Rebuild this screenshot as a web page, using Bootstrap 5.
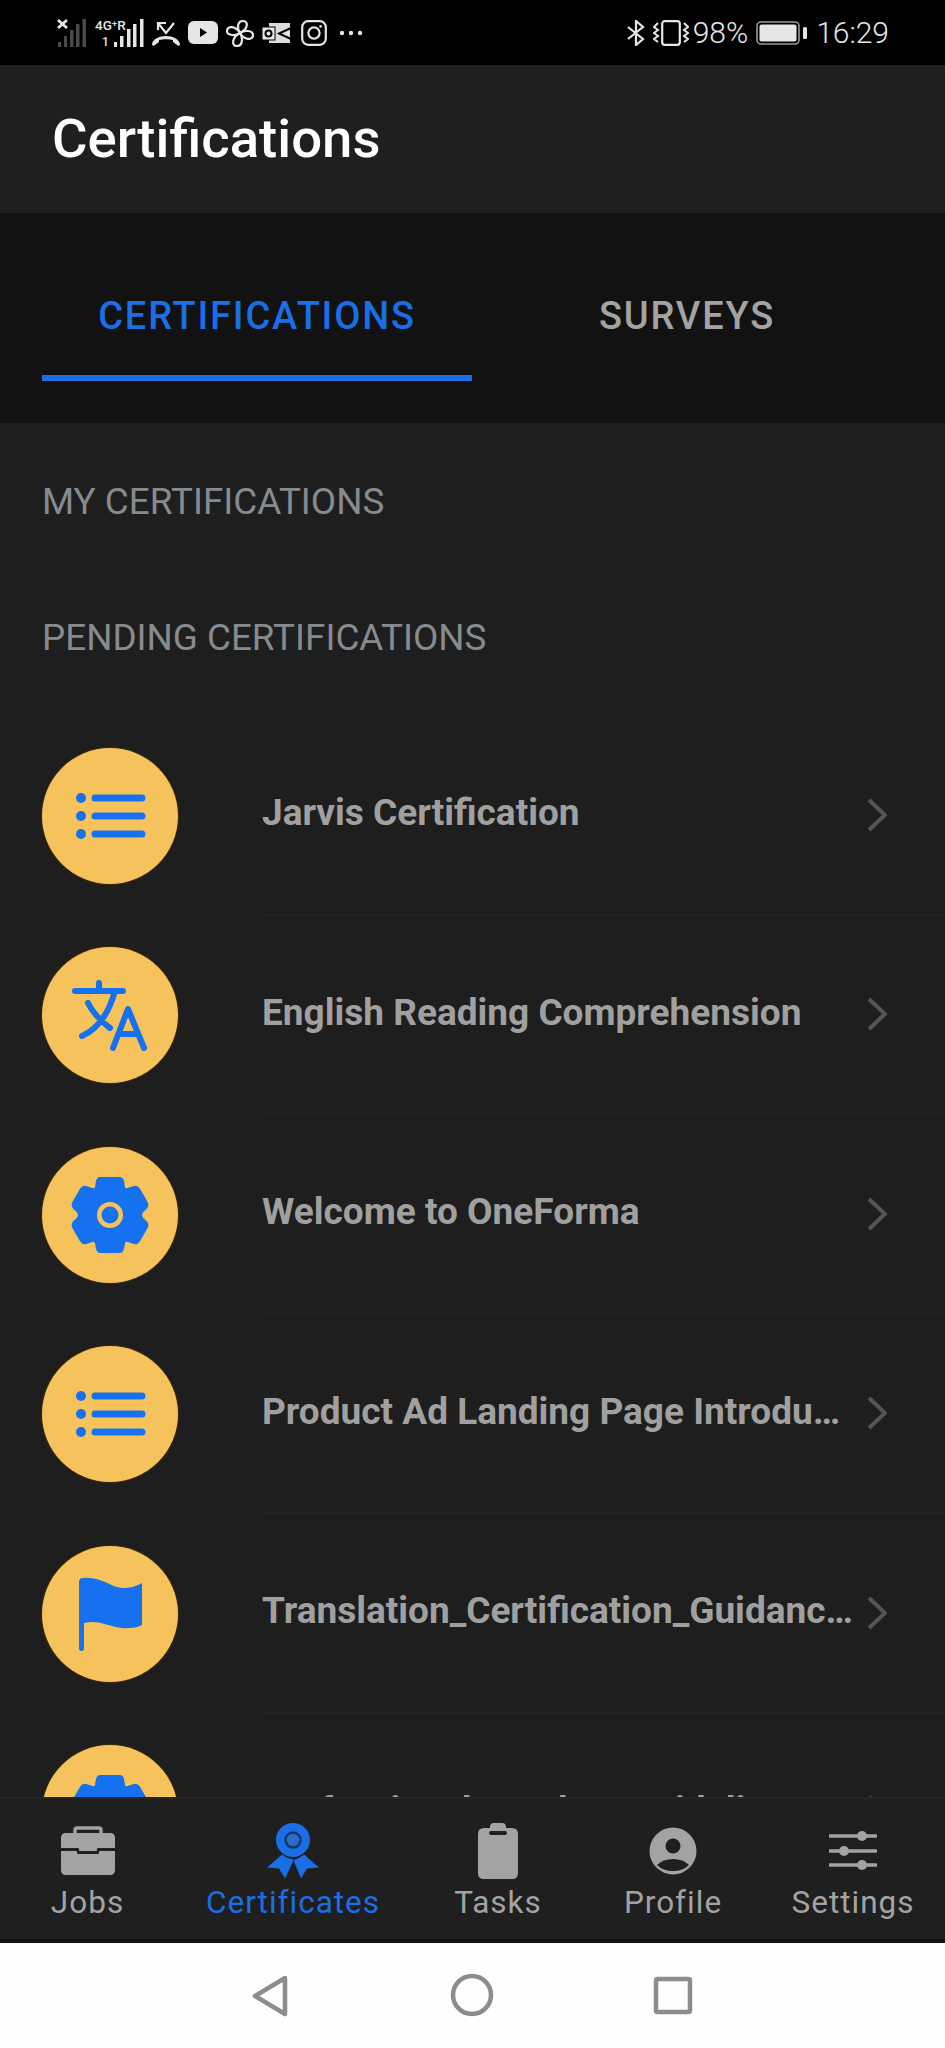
<!DOCTYPE html>
<html lang="en">
<head>
  <meta charset="UTF-8">
  <title>Certifications</title>
  <meta name="viewport" content="width=device-width, initial-scale=1">
  <link href="https://cdn.jsdelivr.net/npm/bootstrap@5.3.3/dist/css/bootstrap.min.css" rel="stylesheet">
  <style>
    html, body {
      height: 100%;
    }
    body {
      font-family: Roboto, "Liberation Sans", sans-serif;
      background-color: #fefefe;
      overflow: hidden;
    }
    .screen {
      height: 2048px;
    }
    .status-bar {
      height: 65px;
      background-color: #000;
      color: #e6e6e6;
      padding: 0 56px 0 57px;
      font-size: 30px;
      font-weight: 300;
      line-height: 1;
    }
    .status-bar svg {
      display: block;
    }
    .app-title {
      height: 148px;
      background-color: #1f1f1f;
      color: #fff;
      padding-left: 52px;
      font-size: 54.5px;
      font-weight: 500;
    }
    .tab-strip {
      height: 210px;
      background-color: #121212;
      padding: 0 43px 0 42px;
    }
    .tab-item {
      flex: 1 1 0;
      height: 168px;
      padding-top: 44px;
      border-bottom: 6px solid transparent;
      font-size: 38px;
      font-weight: 500;
      letter-spacing: 1.8px;
      color: #a3a3a3;
    }
    .tab-item.is-active {
      color: #1a6ee6;
      border-bottom-color: #1a6ee6;
    }
    .content-area {
      min-height: 0;
      background-color: #1e1e1e;
      padding-top: 11px;
    }
    .section-label {
      padding-left: 42px;
      line-height: 136px;
      font-size: 36.8px;
      color: #878a8e;
    }
    .cert-list {
      margin-top: 10px;
    }
    .cert-row {
      height: 199.5px;
      padding-left: 42px;
    }
    .cert-badge {
      width: 136px;
      height: 136px;
      background-color: #f6c25b;
      box-shadow: 0 0 0 1px #3a2a08;
    }
    .cert-badge svg {
      fill: #1671f0;
      stroke: #1671f0;
    }
    .cert-body {
      height: 100%;
      margin-left: 84px;
      padding-right: 59px;
      border-bottom: 2px solid #222;
    }
    .cert-title {
      padding-bottom: 4px;
      font-size: 37px;
      font-weight: 700;
      color: #a0a0a0;
      width: 590px;
    }
    .cert-chevron {
      margin-left: 15px;
    }
    .tab-bar {
      height: 142px;
      background-color: #1f1f1f;
      border-top: 2px solid #252525;
      display: grid;
      grid-template-columns: 175px 236px 174px 176px 184px;
    }
    .tab-bar-item {
      color: #a3a3a3;
      font-size: 31.5px;
      letter-spacing: 1px;
      line-height: 1;
    }
    .tab-bar-item.is-active {
      color: #1a6ee6;
    }
    .tab-glyph {
      height: 56px;
      margin-top: 24px;
      margin-bottom: 8px;
    }
    .tab-glyph svg {
      display: block;
    }
    .sys-bar {
      height: 109px;
      background-color: #fefefe;
      border-top: 4px solid #111;
    }
  </style>
</head>
<body>
<div class="screen d-flex flex-column">

  <div class="status-bar d-flex justify-content-between align-items-center flex-shrink-0">
    <div class="d-flex align-items-center gap-2">
      <!-- empty sim signal -->
      <svg width="30" height="30" viewBox="0 0 30 30">
        <path d="M1 2l9 8M10 2l-9 8" stroke="#e6e6e6" stroke-width="2.8" fill="none"/>
        <rect x="1" y="24" width="3" height="5" fill="#4a4a4a"/>
        <rect x="7" y="18" width="3" height="11" fill="#4a4a4a"/>
        <rect x="13" y="12" width="3.5" height="17" fill="#4a4a4a"/>
        <rect x="19" y="6" width="3.5" height="23" fill="#4a4a4a"/>
        <rect x="25.5" y="1" width="3.5" height="28" fill="#4a4a4a"/>
      </svg>
      <!-- 4G+R signal -->
      <svg width="49" height="30" viewBox="0 0 49 30">
        <text x="0" y="12" font-family="Roboto" font-size="13.5" font-weight="500" fill="#e6e6e6">4G⁺R</text>
        <text x="7" y="28" font-family="Roboto" font-size="12" font-weight="500" fill="#e6e6e6">1</text>
        <rect x="19" y="24" width="3" height="5" fill="#e6e6e6"/>
        <rect x="25" y="18" width="3.500" height="11" fill="#e6e6e6"/>
        <rect x="32" y="11" width="3.500" height="18" fill="#e6e6e6"/>
        <rect x="38" y="6" width="3.500" height="23" fill="#e6e6e6"/>
        <rect x="45" y="1" width="3.500" height="28" fill="#e6e6e6"/>
      </svg>
      <!-- missed call -->
      <svg width="28" height="28" viewBox="0 0 28 28">
        <path d="M6 11V4h8M6 4l8 10 8-10" stroke="#e6e6e6" stroke-width="2.200" fill="none"/>
        <path d="M0 25c1-5 7-8 14-8s13 3 14 8c0 2-2 2-3 1l-4-3v-2c-4-1-10-1-14 0v2l-4 3c-1 1-3 1-3-1z" fill="#e6e6e6"/>
      </svg>
      <!-- youtube -->
      <svg width="30" height="23" viewBox="0 0 30 23">
        <rect width="30" height="23" rx="6" fill="#e6e6e6"/>
        <path d="M12 7l7 4.500-7 4.500z" fill="#000"/>
      </svg>
      <!-- fan app -->
      <svg width="28" height="28" viewBox="0 0 28 28">
        <g fill="none" stroke="#e6e6e6" stroke-width="2.200">
          <path d="M14 14c-3-4-3-12 3-12 6 0 5 8-3 12z"/>
          <path d="M14 14c4-3 13-3 13 2 0 6-9 5-13-2z"/>
          <path d="M14 14c3 4 3 13-3 13-6 0-5-9 3-13z"/>
          <path d="M14 14c-4 3-13 3-13-2 0-6 9-5 13 2z"/>
        </g>
      </svg>
      <!-- video mail -->
      <svg width="31" height="22" viewBox="0 0 31 22">
        <rect x="7" y="1" width="21" height="20" fill="#dcdcdc"/>
        <path d="M29 6L17 11.500 29 17" fill="none" stroke="#000" stroke-width="2"/>
        <path d="M27 9l-6 2.500 6 2.500z" fill="#e6e6e6"/>
        <rect x="0" y="5" width="13" height="13" fill="#e6e6e6" stroke="#000" stroke-width="1"/>
        <circle cx="6.500" cy="11.500" r="3" fill="#e6e6e6" stroke="#000" stroke-width="2"/>
      </svg>
      <!-- instagram -->
      <svg width="26" height="26" viewBox="0 0 26 26">
        <rect x="1.200" y="1.200" width="23.600" height="23.600" rx="6" fill="none" stroke="#e6e6e6" stroke-width="2.200"/>
        <circle cx="13" cy="13" r="5.600" fill="none" stroke="#e6e6e6" stroke-width="2.200"/>
        <circle cx="19.600" cy="6.400" r="1.300" fill="#e6e6e6"/>
      </svg>
      <svg width="24" height="6" viewBox="0 0 24 6" class="ms-1">
        <circle cx="3" cy="3" r="2.200" fill="#e6e6e6"/><circle cx="12" cy="3" r="2.200" fill="#e6e6e6"/><circle cx="21" cy="3" r="2.200" fill="#e6e6e6"/>
      </svg>
    </div>
    <div class="d-flex align-items-center">
      <!-- bluetooth -->
      <svg width="18" height="26" viewBox="0 0 18 26">
        <path d="M1 7l15 12-7 6V1l7 6L1 19" fill="none" stroke="#e6e6e6" stroke-width="2.200"/>
      </svg>
      <!-- vibrate -->
      <svg width="36" height="26" viewBox="0 0 36 26" class="ms-2">
        <rect x="9.200" y="1.200" width="17.600" height="23.600" rx="2.500" fill="none" stroke="#e6e6e6" stroke-width="2.200"/>
        <path d="M5 3L1 7l4 3-4 3 4 3-4 3 4 3M31 3l4 4-4 3 4 3-4 3 4 3-4 3" fill="none" stroke="#e6e6e6" stroke-width="2"/>
      </svg>
      <span class="ms-1">98%</span>
      <!-- battery -->
      <svg width="52" height="24" viewBox="0 0 52 24" class="ms-2">
        <rect x="1" y="1" width="42" height="22" rx="4" fill="none" stroke="#9a9a9a" stroke-width="1.600"/>
        <rect x="3.500" y="3.500" width="37" height="17" rx="2" fill="#e6e6e6"/>
        <rect x="47" y="6" width="4" height="12" rx="1.500" fill="#e6e6e6"/>
      </svg>
      <span class="ms-2">16:29</span>
    </div>
  </div>

  <div class="app-title d-flex align-items-center flex-shrink-0">Certifications</div>

  <div class="tab-strip d-flex flex-shrink-0">
    <div class="tab-item is-active d-flex align-items-center justify-content-center">CERTIFICATIONS</div>
    <div class="tab-item d-flex align-items-center justify-content-center">SURVEYS</div>
  </div>

  <main class="content-area flex-grow-1 overflow-hidden">
    <div class="section-label">MY CERTIFICATIONS</div>
    <div class="section-label">PENDING CERTIFICATIONS</div>

    <ul class="cert-list list-unstyled mb-0">
      <li class="cert-row d-flex align-items-center">
        <div class="cert-badge rounded-circle flex-shrink-0">
          <svg width="136" height="136" viewBox="-68 -68 136 136" stroke-width="7" stroke-linecap="round">
            <use href="#list-lines"/>
          </svg>
        </div>
        <div class="cert-body flex-grow-1 d-flex align-items-center">
          <div class="cert-title text-nowrap">Jarvis Certification</div>
          <svg class="cert-chevron" width="20" height="36" viewBox="0 0 20 36"><path d="M2 3l16 15L2 33" fill="none" stroke="#555" stroke-width="4"/></svg>
        </div>
      </li>
      <li class="cert-row d-flex align-items-center">
        <div class="cert-badge rounded-circle flex-shrink-0">
          <svg width="136" height="136" viewBox="-68 -68 136 136">
            <g style="fill:none" stroke-width="6" stroke-linecap="round" stroke-linejoin="round">
              <path d="M-35-24H13M-11-32v8M5-24C0-6-10 13-28 21M-22-12C-16 0-8 7 0 13M3 33L18-6 34 33M9 19H27"/>
            </g>
          </svg>
        </div>
        <div class="cert-body flex-grow-1 d-flex align-items-center">
          <div class="cert-title text-nowrap">English Reading Comprehension</div>
          <svg class="cert-chevron" width="20" height="36" viewBox="0 0 20 36"><path d="M2 3l16 15L2 33" fill="none" stroke="#555" stroke-width="4"/></svg>
        </div>
      </li>
      <li class="cert-row d-flex align-items-center">
        <div class="cert-badge rounded-circle flex-shrink-0">
          <svg width="136" height="136" viewBox="-68 -68 136 136" stroke-width="2" stroke-linejoin="round">
            <use href="#cog"/>
          </svg>
        </div>
        <div class="cert-body flex-grow-1 d-flex align-items-center">
          <div class="cert-title text-nowrap">Welcome to OneForma</div>
          <svg class="cert-chevron" width="20" height="36" viewBox="0 0 20 36"><path d="M2 3l16 15L2 33" fill="none" stroke="#555" stroke-width="4"/></svg>
        </div>
      </li>
      <li class="cert-row d-flex align-items-center">
        <div class="cert-badge rounded-circle flex-shrink-0">
          <svg width="136" height="136" viewBox="-68 -68 136 136" stroke-width="7" stroke-linecap="round">
            <use href="#list-lines"/>
          </svg>
        </div>
        <div class="cert-body flex-grow-1 d-flex align-items-center">
          <div class="cert-title text-nowrap">Product Ad Landing Page Introdu…</div>
          <svg class="cert-chevron" width="20" height="36" viewBox="0 0 20 36"><path d="M2 3l16 15L2 33" fill="none" stroke="#555" stroke-width="4"/></svg>
        </div>
      </li>
      <li class="cert-row d-flex align-items-center">
        <div class="cert-badge rounded-circle flex-shrink-0">
          <svg width="136" height="136" viewBox="-68 -68 136 136">
            <path style="stroke:none" d="M-31-32q0-4 4-4C-10-38 2-26 13-26Q24-26 32-31V11Q24 15 12 14C0 13-12 5-26 9V34Q-26 37-28.500 37T-31 34Z"/>
          </svg>
        </div>
        <div class="cert-body flex-grow-1 d-flex align-items-center">
          <div class="cert-title text-nowrap">Translation_Certification_Guidanc…</div>
          <svg class="cert-chevron" width="20" height="36" viewBox="0 0 20 36"><path d="M2 3l16 15L2 33" fill="none" stroke="#555" stroke-width="4"/></svg>
        </div>
      </li>
      <li class="cert-row d-flex align-items-center">
        <div class="cert-badge rounded-circle flex-shrink-0">
          <svg width="136" height="136" viewBox="-68 -68 136 136" stroke-width="2" stroke-linejoin="round">
            <use href="#cog"/>
          </svg>
        </div>
        <div class="cert-body flex-grow-1 d-flex align-items-center">
          <div class="cert-title text-nowrap">Professional Conduct Guidelines</div>
          <svg class="cert-chevron" width="20" height="36" viewBox="0 0 20 36"><path d="M2 3l16 15L2 33" fill="none" stroke="#555" stroke-width="4"/></svg>
        </div>
      </li>
    </ul>
  </main>

  <nav class="tab-bar flex-shrink-0">
    <div class="tab-bar-item d-flex flex-column align-items-center">
      <div class="tab-glyph d-flex align-items-center">
        <svg width="56" height="50" viewBox="0 0 56 50">
          <path d="M15 8V4q0-2 2-2h22q2 0 2 2v4" fill="none" stroke="#a3a3a3" stroke-width="3.400"/>
          <path d="M6 7h44q5 0 5 5v10H38q-1 0-1 1v1q0 1-1 1H20q-1 0-1-1v-1q0-1-1-1H1V12q0-5 5-5z" fill="#a3a3a3"/>
          <path d="M1 25h15q1 0 1 1v1q0 1 1 1h20q1 0 1-1v-1q0-1 1-1h15v19q0 5-5 5H6q-5 0-5-5z" fill="#a3a3a3"/>
        </svg>
      </div>
      <span>Jobs</span>
    </div>
    <div class="tab-bar-item is-active d-flex flex-column align-items-center">
      <div class="tab-glyph d-flex align-items-center">
        <svg width="52" height="56" viewBox="0 0 52 56">
          <circle cx="26" cy="17" r="17" fill="#1a6ee6"/>
          <circle cx="26" cy="17" r="7.500" fill="#2a6cc8" stroke="#12396f" stroke-width="2.500"/>
          <path d="M15 31.500q5 4 11 5 1 0 0 2l-8 17-6-10-12-1z" fill="#1a6ee6"/>
          <path d="M37 31.500q-5 4-9 5-1 0-1 2l7 17 6-10 12-1z" fill="#1a6ee6"/>
        </svg>
      </div>
      <span>Certificates</span>
    </div>
    <div class="tab-bar-item d-flex flex-column align-items-center">
      <div class="tab-glyph d-flex align-items-center">
        <svg width="40" height="56" viewBox="0 0 40 56">
          <path d="M12 5V4q0-4 4-4h8q4 0 4 4v1h6q6 0 6 6v39q0 6-6 6H6q-6 0-6-6V11q0-6 6-6zM13 8q-2 0-2 2t2 2h14q2 0 2-2t-2-2z" fill="#a3a3a3" fill-rule="evenodd"/>
        </svg>
      </div>
      <span>Tasks</span>
    </div>
    <div class="tab-bar-item d-flex flex-column align-items-center">
      <div class="tab-glyph d-flex align-items-center">
        <svg width="48" height="48" viewBox="0 0 48 48">
          <circle cx="24" cy="24" r="23.500" fill="#a3a3a3"/>
          <circle cx="24" cy="19" r="7.500" fill="#1f1f1f"/>
          <path d="M8 38q6-6 16-6t16 6q-6 6-16 6T8 38z" fill="#1f1f1f"/>
        </svg>
      </div>
      <span>Profile</span>
    </div>
    <div class="tab-bar-item d-flex flex-column align-items-center">
      <div class="tab-glyph d-flex align-items-center">
        <svg width="48" height="42" viewBox="0 0 48 42">
          <path d="M1 6h46M1 21h46M1 35h46" stroke="#a3a3a3" stroke-width="3.500" stroke-linecap="round"/>
          <circle cx="33" cy="6" r="5" fill="#a3a3a3"/><circle cx="15" cy="21" r="5" fill="#a3a3a3"/><circle cx="33" cy="35" r="5" fill="#a3a3a3"/>
        </svg>
      </div>
      <span>Settings</span>
    </div>
  </nav>

  <div class="sys-bar d-flex flex-shrink-0 align-items-center">
    <svg width="945" height="105" viewBox="0 0 945 105">
      <g fill="none" stroke="#8c8c8c" stroke-width="4.500" stroke-linejoin="round">
        <path d="M285 35L255 53 285 71z"/>
        <circle cx="472" cy="52" r="19"/>
        <rect x="656" y="36" width="34" height="33" rx="1.500"/>
      </g>
    </svg>
  </div>
</div>

<svg width="0" height="0" class="position-absolute">
  <defs>
    <g id="list-lines">
      <circle cx="-29" cy="-18" r="5" stroke="none"/><circle cx="-29" cy="0" r="5" stroke="none"/><circle cx="-29" cy="18" r="5" stroke="none"/>
      <path d="M-15-18H32M-15 0H32M-15 18H32" fill="none"/>
    </g>
    <g id="cog">
      <path d="M-10-37H10Q12-37 13-34L14-28Q15-25 18-26L24-28Q27-29 29-26L37-12Q38-9 36-7L32-3Q30 0 32 3L36 7Q38 9 37 12L29 26Q27 29 24 28L18 26Q15 25 14 28L13 34Q12 37 10 37H-10Q-12 37-13 34L-14 28Q-15 25-18 26L-24 28Q-27 29-29 26L-37 12Q-38 9-36 7L-32 3Q-30 0-32-3L-36-7Q-38-9-37-12L-29-26Q-27-29-24-28L-18-26Q-15-25-14-28L-13-34Q-12-37-10-37Z"/>
      <circle r="13" style="fill:#f6c25b;stroke:none"/>
      <circle r="8.500" stroke="none"/>
    </g>
  </defs>
</svg>
</body>
</html>
